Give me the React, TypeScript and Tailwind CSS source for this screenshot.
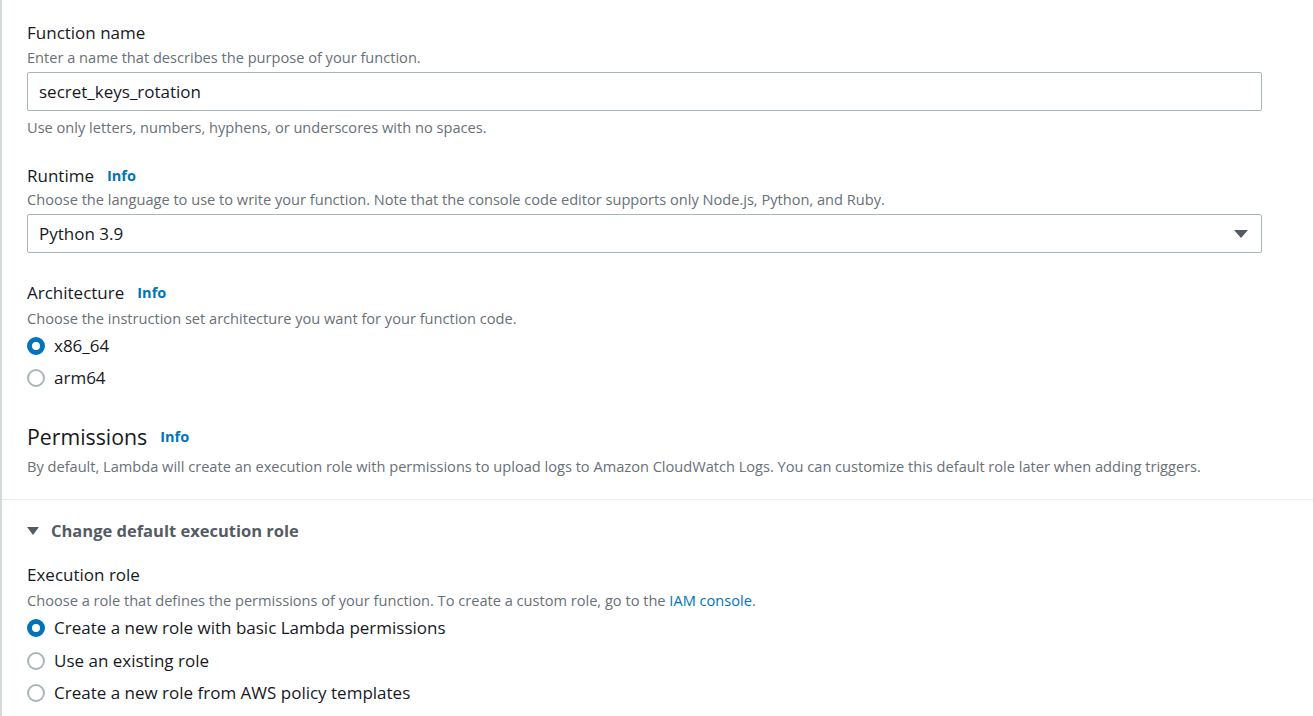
import React from "react"

function Info(){
    return <a className="ml-[13px] text-[14.5px] font-bold text-[#0073bb] leading-[22px]">Info</a>
}

function Radio({checked,label}:{checked?:boolean,label:string}){
    return(
        <div className="flex items-center h-[24px]">
            {checked ? (
                <span className="w-[18px] h-[18px] rounded-full border-[5px] border-[#0073bb] bg-white box-border"/>
            ) : (
                <span className="w-[18px] h-[18px] rounded-full border-2 border-[#aab7b8] bg-white box-border"/>
            )}
            <span className="ml-[9px] text-[17px] leading-[24px] text-[#16191f]">{label}</span>
        </div>
    )
}

export default function App(){
    return(
        <div className="w-[1313px] h-[716px] overflow-hidden bg-white border-l-2 border-[#d5dbdb]" style={{fontFamily:'"Open Sans", "Noto Sans", sans-serif'}}>
            <div className="pl-[25px] pr-[51px] pt-[22px]">

                {/* function name */}
                <div className="text-[17px] leading-[22px] text-[#16191f]">Function name</div>
                <div className="mt-[3px] text-[14.6px] leading-[20px] text-[#687078]">Enter a name that describes the purpose of your function.</div>
                <div className="mt-[5px] h-[39px] flex items-center px-[11px] border border-[#aab7b8] rounded-[2px] text-[17px] text-[#16191f]">
                    secret_keys_rotation
                </div>
                <div className="mt-[6px] text-[14.6px] leading-[20px] text-[#687078]">Use only letters, numbers, hyphens, or underscores with no spaces.</div>

                {/* runtime */}
                <div className="mt-[28px] flex items-center text-[17px] leading-[22px] text-[#16191f]">Runtime<Info/></div>
                <div className="mt-[2px] text-[14.6px] leading-[20px] text-[#687078]">Choose the language to use to write your function. Note that the console code editor supports only Node.js, Python, and Ruby.</div>
                <div className="mt-[5px] h-[39px] flex items-center justify-between pl-[11px] pr-[13px] border border-[#aab7b8] rounded-[2px] text-[17px] text-[#16191f]">
                    <span>Python 3.9</span>
                    <svg width="14" height="10" viewBox="0 0 14 10"><path d="M0 1 L14 1 L7 9 Z" fill="#545b64"/></svg>
                </div>

                {/* architecture */}
                <div className="mt-[29px] flex items-center text-[17px] leading-[22px] text-[#16191f]">Architecture<Info/></div>
                <div className="mt-[4px] text-[14.6px] leading-[20px] text-[#687078]">Choose the instruction set architecture you want for your function code.</div>
                <div className="mt-[6px] flex flex-col gap-[8px]">
                    <Radio checked label="x86_64"/>
                    <Radio label="arm64"/>
                </div>

                {/* permissions */}
                <div className="mt-[33px] flex items-center text-[21.3px] leading-[28px] text-[#16191f]">Permissions<Info/></div>
                <div className="mt-[5px] text-[14.6px] leading-[20px] text-[#687078]">By default, Lambda will create an execution role with permissions to upload logs to Amazon CloudWatch Logs. You can customize this default role later when adding triggers.</div>
            </div>

            <div className="mt-[23px] h-px bg-[#eaeded]"/>

            <div className="pl-[25px] pr-[51px]">
                <div className="mt-[20px] flex items-center text-[16.5px] leading-[22px] font-bold text-[#545b64]">
                    <svg width="12" height="10" viewBox="0 0 12 10" className="mr-[12px]"><path d="M0 1 L12 1 L6 9 Z" fill="#545b64"/></svg>
                    Change default execution role
                </div>

                <div className="mt-[22px] text-[17px] leading-[22px] text-[#16191f]">Execution role</div>
                <div className="mt-[4px] text-[14.6px] leading-[20px] text-[#687078]">
                    Choose a role that defines the permissions of your function. To create a custom role, go to the <a className="text-[#0073bb]">IAM console</a>.
                </div>
                <div className="mt-[6px] flex flex-col gap-[8.5px]">
                    <Radio checked label="Create a new role with basic Lambda permissions"/>
                    <Radio label="Use an existing role"/>
                    <Radio label="Create a new role from AWS policy templates"/>
                </div>
            </div>
        </div>
    )
}
